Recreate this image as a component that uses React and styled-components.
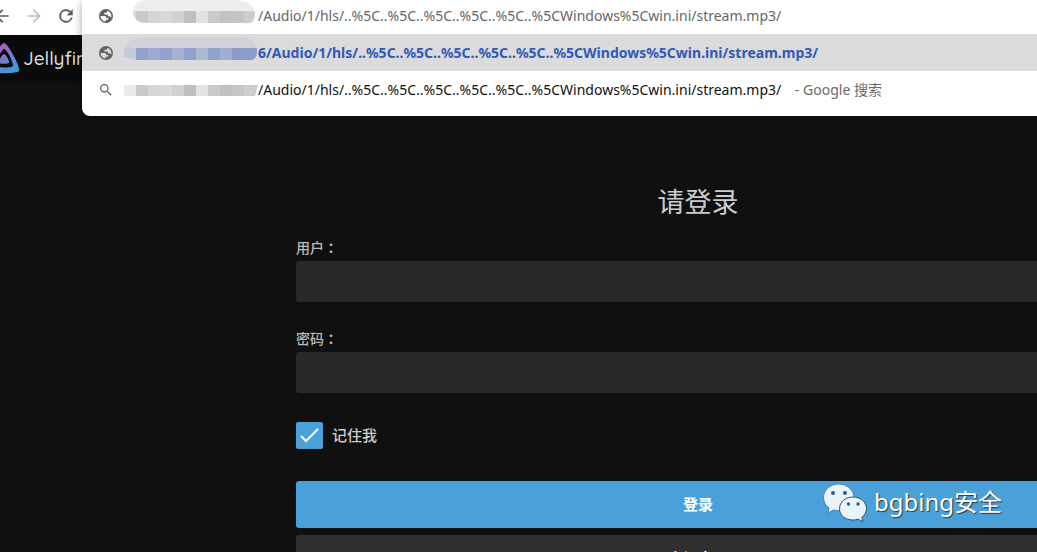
import React from "react";
import styled, { createGlobalStyle, css } from "styled-components";

const Global = createGlobalStyle`
  * { box-sizing: border-box; }
  html, body { margin: 0; height: 100%; background: #101010; overflow: hidden; }
  body { font-family: "Noto Sans", "Noto Sans CJK SC", sans-serif; }
  #root { height: 100%; }
  button, input { font: inherit; border: 0; padding: 0; margin: 0; }
`;

const Page = styled.div`
  display: flex;
  flex-direction: column;
  height: 100%;
  overflow: hidden;
`;

const Browser = styled.header`
  position: relative;
`;

const Toolbar = styled.div`
  display: flex;
  align-items: center;
  gap: 12px;
  height: 35px;
  margin-left: -8px;
  padding-bottom: 3px;
  background: #fff;
`;

const NavButton = styled.button`
  display: flex;
  width: 20px;
  height: 20px;
  background: none;
  color: ${(p) => (p.disabled ? "#bcbec0" : "#5a5d61")};
  svg { display: block; width: 20px; height: 20px; fill: currentColor; }
`;

const SiteHeader = styled.div`
  display: flex;
  align-items: center;
  height: 46px;
  gap: 3px;
  background: #0a0a0a;
  color: #ddd;
`;

const Brand = styled.span`
  font: 500 19px/28px Quicksand, "Noto Sans", sans-serif;
`;

const Omnibox = styled.div`
  position: absolute;
  top: 0;
  left: 82px;
  right: 0;
  padding-bottom: 8px;
  background: #fff;
  border-radius: 0 0 0 8px;
  box-shadow: 0 2px 10px rgba(0, 0, 0, 0.35);
`;

const Suggestion = styled.div`
  display: flex;
  align-items: center;
  height: ${(p) => (p.$first ? 34 : 37)}px;
  padding: 0 0 ${(p) => (p.$first ? 2 : 0)}px 16px;
  background: ${(p) => (p.$active ? "#dbdbdb" : "#fff")};
  color: ${(p) => p.$color};
  font-size: 14px;
  line-height: 20px;
  white-space: pre;
  ${(p) => p.$active && css`font-weight: 700;`}
  > svg { flex: none; width: 16px; height: 16px; fill: #5f6368; }
`;

const Mask = styled.svg`
  && { width: 134px; height: 34px; margin-left: 10px; }
`;

const Hint = styled.span`
  margin-left: 10px;
  color: #6b6b6b;
`;

const Login = styled.form`
  display: flex;
  flex-direction: column;
  flex: none;
  width: 804px;
  margin-left: 296px;
  padding-top: 101px;
  color: #ccc;
`;

const Title = styled.h1`
  margin: 0 0 15px;
  font-size: 27px;
  font-weight: 400;
  line-height: 40px;
  text-align: center;
`;

const Field = styled.label`
  display: flex;
  flex-direction: column;
  margin-bottom: 26px;
  color: #bbb;
  font-size: 14px;
  font-weight: 500;
  line-height: 20px;
`;

const FieldName = styled.span`
  height: 20px;
`;

const Colon = styled.span`
  font-family: "Noto Sans CJK TC", sans-serif;
  font-weight: 700;
`;

const FieldInput = styled.input`
  height: 41px;
  margin-top: 4px;
  padding: 0 8px;
  border-radius: 3px;
  background: #292929;
  color: #fff;
`;

const Remember = styled.label`
  display: flex;
  align-items: center;
  gap: 9px;
  margin: 3px 0 32px;
  font-size: 15px;
  font-weight: 500;
  line-height: 27px;
`;

const TickBox = styled.span`
  display: grid;
  width: 27px;
  height: 27px;
  > * { grid-area: 1 / 1; }
  svg { width: 27px; height: 27px; pointer-events: none; }
`;

const Tick = styled.input`
  appearance: none;
  width: 27px;
  height: 27px;
  border-radius: 2px;
  background: #4aa1d9;
`;

const Action = styled.button`
  flex: none;
  height: 47px;
  margin-bottom: 7px;
  padding-bottom: 2px;
  border-radius: 3px;
  background: ${(p) => (p.$primary ? "#4aa1d9" : "#303030")};
  color: #fff;
  font-size: 15px;
  font-weight: 700;
`;

const Watermark = styled.div`
  position: absolute;
  right: 35px;
  top: 482px;
  display: flex;
  align-items: center;
  gap: 7px;
  color: #fff;
  font-size: 24px;
  line-height: 40px;
  text-shadow: 1px 1px 1px #333;
`;

const Globe = () => (
  <svg viewBox="0 0 16 16" aria-hidden="true">
    <path fillRule="evenodd" d="M8 1a7 7 0 1 0 0 14A7 7 0 0 0 8 1zM2.600 8h4.200c1.200 0 1.600 1 1.600 2h1.800v1.700H7.700v1.700C4.900 13.300 2.600 11 2.600 8zM9.300 2.800c2.400.6 4.100 2.700 4.100 5.200 0 .7-.1 1.200-.3 1.700-.4-.9-1-1.500-2-1.500H9.800V6.500H6.400V4.700h1.700c.7 0 1.200-.5 1.200-1.200z" />
  </svg>
);

const grey = ["#d6d6d6", "#c9c9ca", "#d5d5d5", "#d8d8d8", "#d1d1cf", "#bfbfc0", "#dfe3e2", "#cacaca", "#c2c2bf", "#c5c5c5", "#cdcdcd"];
const blue = ["#c7cbd7", "#91a3cd", "#9dabd0", "#91a2cf", "#a6b2cf", "#8fa1cc", "#afb9ce", "#8fa2cc", "#a1aed1", "#8b9cca", "#8b9dcb"];

function Pixels({ id, colors, shape, haze }) {
  return (
    <Mask viewBox="0 0 134 34" aria-hidden="true">
      <clipPath id={id}><path d={shape} /></clipPath>
      <g clipPath={`url(#${id})`}>
        {haze && <rect width="136" height="34" fill={haze} />}
        {colors.map((c, i) => (
          <rect key={i} x={i * 12} y="12" width="14" height="12" fill={c} />
        ))}
      </g>
    </Mask>
  );
}

const url = "/Audio/1/hls/..%5C..%5C..%5C..%5C..%5C..%5CWindows%5Cwin.ini/stream.mp3/";

export default function App() {
  return (
    <Page>
      <Global />
      <Browser>
        <Toolbar>
          <NavButton type="button" aria-label="Back">
            <svg viewBox="0 0 24 24"><path d="M20 11H7.830l5.590-5.590L12 4l-8 8 8 8 1.410-1.410L7.830 13H20z" /></svg>
          </NavButton>
          <NavButton type="button" aria-label="Forward" disabled>
            <svg viewBox="0 0 24 24"><path d="m12 4-1.410 1.410L16.170 11H4v2h12.170l-5.580 5.590L12 20l8-8z" /></svg>
          </NavButton>
          <NavButton type="button" aria-label="Reload">
            <svg viewBox="0 0 24 24"><path d="M17.650 6.350A8 8 0 1 0 19.730 14h-2.080A6 6 0 1 1 12 6c1.660 0 3.140.69 4.220 1.780L13 11h7V4z" stroke="currentColor" strokeWidth=".3" /></svg>
          </NavButton>
        </Toolbar>
        <SiteHeader>
          <svg width="20" height="32" viewBox="0 0 20 32" aria-hidden="true">
            <defs>
              <linearGradient id="fin" gradientUnits="userSpaceOnUse" x1="-2" y1="8" x2="14" y2="30">
                <stop offset="0" stopColor="#a460c5" /><stop offset="1" stopColor="#35a0dc" />
              </linearGradient>
            </defs>
            <path fill="url(#fin)" fillRule="evenodd" d="M4 1C0 1-14 26-12 29S17 32 19 29 8 1 4 1zm0 6c3 0 10 15 9 17s-17 2-18 0S2 7 4 7z" />
            <path fill="url(#fin)" d="M4 12c-2 0-6 8-5 9s9 1 10 0-3-9-5-9z" />
          </svg>
          <Brand>Jellyfin</Brand>
        </SiteHeader>
        <Omnibox>
          <Suggestion $first $color="#666">
            <Globe />
            <Pixels id="m1" colors={grey} haze="#eceeed" shape="M9 12Q10 2 22 1H112Q131 3 131 15T118 24H22Q10 24 9 12z" />
            {url}
          </Suggestion>
          <Suggestion $active $color="#3159b8">
            <Globe />
            <Pixels id="m2" colors={blue} haze="#d0d2d7" shape="M0 12Q4 2 22 1H118Q133 3 133 15T120 24H12L0 21z" />
            {"6" + url}
          </Suggestion>
          <Suggestion $color="#111">
            <svg viewBox="0 0 24 24" aria-hidden="true"><path d="M15.500 14h-.79l-.28-.27a6.500 6.500 0 1 0-.7.700l.27.280v.790l5 4.990L20.490 19zM9.500 14a4.500 4.500 0 1 1 0-9 4.500 4.500 0 0 1 0 9z" /></svg>
            <Pixels id="m3" colors={["#eceae9", ...grey.slice(1)]} shape="M0 11H134L131 23H0z" />
            {url}
            <Hint>{" - Google 搜索"}</Hint>
          </Suggestion>
        </Omnibox>
      </Browser>
      <Login>
        <Title>请登录</Title>
        <Field><FieldName>用户<Colon>：</Colon></FieldName><FieldInput type="text" /></Field>
        <Field><FieldName>密码<Colon>：</Colon></FieldName><FieldInput type="password" /></Field>
        <Remember>
          <TickBox>
            <Tick type="checkbox" defaultChecked />
            <svg viewBox="0 0 27 27" aria-hidden="true"><path d="m5 14 5 5L22 7" fill="none" stroke="#fff" strokeWidth="2" /></svg>
          </TickBox>
          记住我
        </Remember>
        <Action type="submit" $primary>登录</Action>
        <Action type="button">忘记密码</Action>
      </Login>
      <Watermark>
        <svg width="44" height="40" viewBox="0 0 44 40" aria-hidden="true">
          <g fill="#e8f3fa" stroke="#4583ad" strokeWidth="1">
            <path d="M15.500 2C7 2 .5 8 .5 15.500c0 4.500 2 8 5.500 10.500l-1 5 5.500-3c2 .6 3.500.8 5.500.8 8.500 0 15-6 15-13.300S24 2 15.500 2z" />
            <path stroke="#31546b" d="M30 15c-7.500 0-13.500 5-13.500 11.800S22.500 38 30 38c2 0 3.500-.3 5-.8l5 2.300-1.200-4C41.500 33 43.500 30 43.500 26.500 43.500 20 37.500 15 30 15z" />
          </g>
          <g fill="#315d7b"><circle cx="10" cy="11" r="2" /><circle cx="22" cy="11" r="2" /><circle cx="25.500" cy="22" r="1.700" /><circle cx="35" cy="22" r="1.700" /></g>
        </svg>
        bgbing安全
      </Watermark>
    </Page>
  );
}
